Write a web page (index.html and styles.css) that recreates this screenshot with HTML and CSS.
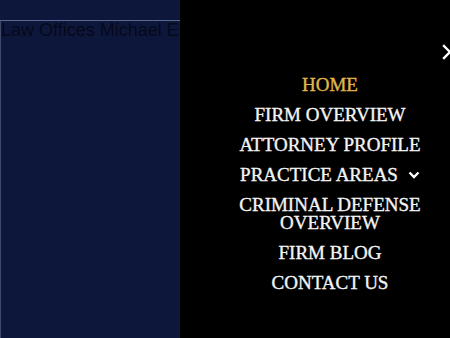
FILE: index.html
```html
<!DOCTYPE html>
<html>
<head>
<meta charset="utf-8">
<link rel="stylesheet" href="styles.css">
</head>
<body>
<header class="site-header">
  <div class="logo">Law Offices Michael E. Clark</div>
</header>
<nav class="menu-panel">
  <button class="close-btn" aria-label="Close">
    <svg width="16" height="16" viewBox="0 0 16 16"><path d="M2 2 L14 14 M14 2 L2 14" stroke="#fff" stroke-width="2.4" stroke-linecap="square" fill="none"/></svg>
  </button>
  <ul class="menu">
    <li class="item active">HOME</li>
    <li class="item">FIRM OVERVIEW</li>
    <li class="item">ATTORNEY PROFILE</li>
    <li class="item">PRACTICE AREAS<svg class="chev" width="12" height="8" viewBox="0 0 12 8"><path d="M1.5 1.5 L6 6 L10.5 1.5" stroke="#fff" stroke-width="2.4" fill="none"/></svg></li>
    <li class="item">CRIMINAL DEFENSE<br>OVERVIEW</li>
    <li class="item">FIRM BLOG</li>
    <li class="item">CONTACT US</li>
  </ul>
</nav>
</body>
</html>
```
FILE: styles.css
```css
html, body {
  margin: 0;
  padding: 0;
  height: 100%;
  overflow: hidden;
}
body {
  background: #0d173b;
  font-family: "Liberation Sans", Arial, sans-serif;
}
.site-header {
  padding-top: 20px;
  height: 100%;
  box-sizing: border-box;
}
.logo {
  height: 100%;
  border-top: 1px solid #5a6890;
  border-left: 1px solid #3c4a72;
  font-size: 18px;
  line-height: 17px;
  padding-top: 1px;
  color: #06091a;
  white-space: nowrap;
  overflow: hidden;
}
.menu-panel {
  position: fixed;
  top: 0;
  right: 0;
  width: 270px;
  height: 100%;
  background: #000;
}
.close-btn {
  position: absolute;
  top: 44px;
  right: -8px;
  padding: 0;
  margin: 0;
  border: 0;
  background: none;
  width: 16px;
  height: 16px;
}
.close-btn svg { display: block; }
.menu {
  list-style: none;
  margin: 0;
  padding: 70px 0 0 30px;
  text-align: center;
  font-family: "Liberation Serif", "Times New Roman", serif;
  font-size: 19px;
  line-height: 18px;
  color: #f4f4f4;
  -webkit-text-stroke: 0.35px currentColor;
}
.item {
  padding: 6px 0;
}
.item.active {
  color: #e0b84a;
}
.chev {
  margin-left: 10px;
  vertical-align: 2px;
}
```
